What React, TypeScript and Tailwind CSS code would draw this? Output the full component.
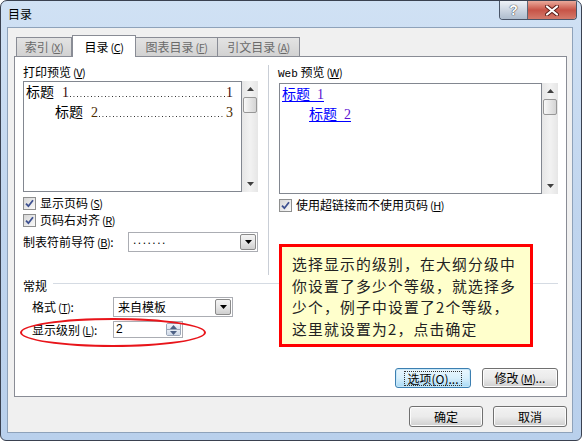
import React from 'react'

function Mn({ k }: { k: string }) {
  return (
    <span className="ml-[2px] text-[11px] tracking-[-0.5px]">
      (<span className="underline underline-offset-[1px]">{k}</span>)
    </span>
  )
}

function Tri({ up, className = 'fill-black' }: { up?: boolean; className?: string }) {
  return (
    <svg width="7" height="4" viewBox="0 0 7 4" className={className}>
      {up ? <path d="M0 4 L3.5 0 L7 4 Z" /> : <path d="M0 0 L7 0 L3.5 4 Z" />}
    </svg>
  )
}

function Check({ children }: { children: React.ReactNode }) {
  return (
    <div className="flex h-[16px] items-center gap-[4px]">
      <span className="flex h-[13px] w-[13px] items-center justify-center border border-[#8e8f8f] bg-gradient-to-br from-[#d6d6d6] to-[#fafafa]">
        <svg width="9" height="9" viewBox="0 0 9 9">
          <path d="M1 4.6 L3.4 7.2 L8 1.2" fill="none" stroke="#3e5190" strokeWidth="1.8" />
        </svg>
      </span>
      <span>{children}</span>
    </div>
  )
}

function VScroll() {
  return (
    <div className="flex w-[16px] flex-col bg-gradient-to-r from-[#e6e6e6] via-[#f2f2f2] to-[#e6e6e6]">
      <div className="flex h-[16px] items-center justify-center">
        <Tri up className="fill-[#404040]" />
      </div>
      <div className="mx-[1px] h-[16px] rounded-[2px] border border-[#979797] bg-gradient-to-r from-[#f8f8f8] to-[#d4d4d4]" />
      <div className="flex-1" />
      <div className="flex h-[16px] items-center justify-center">
        <Tri className="fill-[#404040]" />
      </div>
    </div>
  )
}

function DropBtn() {
  return (
    <div className="m-[1px] flex w-[16px] items-center justify-center rounded-[2px] border border-[#8a8a8a] bg-gradient-to-b from-[#f4f4f4] via-[#e6e6e6] to-[#cfcfcf]">
      <Tri />
    </div>
  )
}

function Btn({ children, focus }: { children: React.ReactNode; focus?: boolean }) {
  return (
    <div
      className={
        focus
          ? 'flex h-[20px] w-[76px] items-center justify-center rounded-[3px] border border-[#3c7fb1] bg-gradient-to-b from-[#eaf6fd] via-[#d9f0fc] to-[#a7d9f5] shadow-[inset_0_0_0_1px_#c7e7f8]'
          : 'flex h-[20px] w-[76px] items-center justify-center rounded-[3px] border border-[#707070] bg-gradient-to-b from-[#f2f2f2] via-[#ebebeb] to-[#cfcfcf] shadow-[inset_0_0_0_1px_#fcfcfc]'
      }
    >
      <span className={focus ? 'border border-dotted border-[#333] px-[2px] leading-[13px]' : 'px-[3px] leading-[13px]'}>
        {children}
      </span>
    </div>
  )
}

function DlgBtn({ children }: { children: React.ReactNode }) {
  return (
    <div className="flex h-[21px] w-[74px] items-center justify-center rounded-[3px] border border-[#707070] bg-gradient-to-b from-[#f2f2f2] via-[#ebebeb] to-[#cfcfcf] shadow-[inset_0_0_0_1px_#fcfcfc]">
      {children}
    </div>
  )
}

function Tab({ children, active, w }: { children: React.ReactNode; active?: boolean; w: string }) {
  return active ? (
    <div className={`${w} relative z-10 -mb-[1px] flex h-[22px] items-center justify-center border border-b-0 border-[#898c95] bg-white text-black`}>
      {children}
    </div>
  ) : (
    <div className={`${w} flex h-[19px] items-center justify-center border border-b-0 border-l-0 border-[#898c95] bg-gradient-to-b from-[#e3e3e3] to-[#d2d2d2] text-[#6a6a6a] first:border-l`}>
      {children}
    </div>
  )
}

// dotted tab leader drawn as a repeating background
function Leader() {
  return (
    <span className="mx-[1px] mb-[1px] h-[1px] flex-1 bg-[linear-gradient(to_right,#222_1px,transparent_1px)] bg-[length:3.5px_1px] bg-repeat-x" />
  )
}

export default function App() {
  return (
    <div className="h-[441px] w-[582px] font-['Noto_Sans_CJK_SC',sans-serif] text-[12px] leading-[16px] text-black">
      <div className="flex h-full flex-col overflow-hidden rounded-t-[7px] rounded-b-[6px] border border-[#3a4150] bg-gradient-to-b from-[#d0e1f4] via-[#c0d5ee] to-[#b9d0ec]">
        {/* title bar */}
        <div className="flex h-[26px] items-start justify-between">
          <div className="pl-[7px] pt-[5px]">目录</div>
          <div className="mr-[4px] flex h-[19px] overflow-hidden rounded-b-[4px] border border-t-0 border-[#4a5568]">
            <div className="flex w-[28px] items-center justify-center border-r border-[#5b6676] bg-gradient-to-b from-[#eef2f7] via-[#cdd6e2] to-[#aebccd]">
              <span className="font-['Liberation_Sans',sans-serif] text-[14px] font-bold leading-none text-white [text-shadow:0_0_1px_#333,0_0_1px_#333]">
                ?
              </span>
            </div>
            <div className="flex w-[48px] items-center justify-center bg-gradient-to-b from-[#e9a99b] via-[#c75347] to-[#d47a6b]">
              <svg width="14" height="11" viewBox="0 0 14 11">
                <path d="M2 1.5 L12 9.5 M12 1.5 L2 9.5" stroke="#5a1d18" strokeWidth="4" strokeLinecap="round" />
                <path d="M2 1.5 L12 9.5 M12 1.5 L2 9.5" stroke="#ffffff" strokeWidth="2.2" strokeLinecap="round" />
              </svg>
            </div>
          </div>
        </div>

        {/* client area */}
        <div className="mb-[7px] ml-[6px] mr-[8px] flex flex-1 flex-col border border-[#8ea2ba] bg-[#f0f0f0] pl-[6px] pr-[5px] pt-[7px]">
          <div className="relative z-10 flex h-[21px] items-end pl-[2px]">
            <Tab w="w-[56px]">
              索引<Mn k="X" />
            </Tab>
            <Tab w="w-[64px]" active>
              目录<Mn k="C" />
            </Tab>
            <Tab w="w-[82px]">
              图表目录<Mn k="F" />
            </Tab>
            <Tab w="w-[82px]">
              引文目录<Mn k="A" />
            </Tab>
          </div>

          <div className="relative flex h-[341px] flex-col border border-[#898c95] bg-white pb-[8px] pl-[8px] pr-[8px] pt-[7px]">
            <div className="flex h-[211px]">
              {/* print preview */}
              <div className="flex w-[235px] flex-col">
                <div>
                  打印预览<Mn k="V" />
                </div>
                <div className="mt-[1px] flex h-[111px]">
                  <div className="w-[219px] border border-[#828790] pl-[2px] pr-[8px] text-[14px] leading-[18px]">
                    <div className="flex items-baseline">
                      <span>标题</span>
                      <span className="ml-[8px] font-['Liberation_Serif',serif] text-[#3a0a0a]">1</span>
                      <Leader />
                      <span className="font-['Liberation_Serif',serif] text-[#3a0a0a]">1</span>
                    </div>
                    <div className="flex items-baseline pl-[29px]">
                      <span>标题</span>
                      <span className="ml-[8px] font-['Liberation_Serif',serif] text-[#4a2a00]">2</span>
                      <Leader />
                      <span className="font-['Liberation_Serif',serif] text-[#4a2a00]">3</span>
                    </div>
                  </div>
                  <VScroll />
                </div>
                <div className="mt-[3px]">
                  <Check>
                    显示页码<Mn k="S" />
                  </Check>
                </div>
                <div className="mt-[1px]">
                  <Check>
                    页码右对齐<Mn k="R" />
                  </Check>
                </div>
                <div className="mt-[4px] flex h-[20px] items-center">
                  <span>
                    制表符前导符<Mn k="B" />:
                  </span>
                  <div className="ml-auto flex h-[20px] w-[130px] border border-[#abadb3] bg-white">
                    <span className="flex-1 pl-[4px] font-['Liberation_Sans',sans-serif] text-[12px] leading-[15px] tracking-[1.5px]">
                      .......
                    </span>
                    <DropBtn />
                  </div>
                </div>
              </div>

              <div className="ml-[10px] mt-[1px] w-px bg-[#c9ced6]" />

              {/* web preview */}
              <div className="ml-[9px] flex flex-1 flex-col">
                <div>
                  <span className="font-['Liberation_Mono',monospace] text-[11px]">Web</span> 预览<Mn k="W" />
                </div>
                <div className="ml-[1px] mt-[1px] flex h-[111px]">
                  <div className="w-[263px] border border-[#828790] pl-[2px] text-[14px] leading-[18px] text-[#0000ff]">
                    <div>
                      <span className="underline underline-offset-[2px]">
                        标题{'\u2002'}
                        <span className="font-['Liberation_Serif',serif] text-[#5a10d0]">1</span>
                      </span>
                    </div>
                    <div className="pl-[27px]">
                      <span className="underline underline-offset-[2px]">
                        标题{'\u2002'}
                        <span className="font-['Liberation_Serif',serif] text-[#5a10d0]">2</span>
                      </span>
                    </div>
                  </div>
                  <VScroll />
                </div>
                <div className="ml-[1px] mt-[3px]">
                  <Check>
                    使用超链接而不使用页码<Mn k="H" />
                  </Check>
                </div>
              </div>
            </div>

            {/* general */}
            <div className="mt-[3px] flex h-[16px]">
              <span>常规</span>
              <div className="ml-[6px] mt-[5px] h-px flex-1 bg-[#d5dbe3]" />
            </div>
            <div className="mt-[3px] flex h-[20px] items-center pl-[9px]">
              <span className="w-[81px]">
                格式<Mn k="T" />:
              </span>
              <div className="flex h-[20px] w-[120px] border border-[#abadb3] bg-white">
                <span className="flex-1 pl-[4px] leading-[18px]">来自模板</span>
                <DropBtn />
              </div>
            </div>
            <div className="mt-[4px] flex h-[17px] items-center pl-[9px]">
              <span className="w-[81px]">
                显示级别<Mn k="L" />:
              </span>
              <div className="flex h-[17px] w-[70px] border border-[#abadb3] bg-white">
                <span className="flex-1 pl-[2px] font-['Liberation_Sans',sans-serif] leading-[15px]">2</span>
                <div className="m-[1px] flex w-[15px] flex-col overflow-hidden rounded-[2px] border border-[#9aa6b8]">
                  <div className="flex flex-1 items-center justify-center border-b border-[#9aa6b8] bg-gradient-to-b from-[#f2f5fa] to-[#dbe3ee]">
                    <Tri up className="fill-[#4d6185]" />
                  </div>
                  <div className="flex flex-1 items-center justify-center bg-gradient-to-b from-[#e6ecf4] to-[#cfd9e7]">
                    <Tri className="fill-[#4d6185]" />
                  </div>
                </div>
              </div>
            </div>

            <div className="mt-auto flex justify-end gap-[11px]">
              <Btn focus>选项(O)...</Btn>
              <Btn>
                修改<Mn k="M" />...
              </Btn>
            </div>

            {/* annotations */}
            <div className="absolute left-[5px] top-[261px] h-[29px] w-[186px] rounded-[50%] border-2 border-[#e8141a]" />
            <div className="absolute left-[264px] top-[187px] h-[103px] w-[254px] border-[3px] border-[#ff0000] bg-[#ffffcc] pl-[10px] pt-[6px] text-[14.8px] leading-[21.5px] tracking-[1.2px] text-[#222]">
              选择显示的级别，在大纲分级中
              <br />
              你设置了多少个等级，就选择多
              <br />
              少个，例子中设置了2个等级，
              <br />
              这里就设置为2，点击确定
            </div>
          </div>

          <div className="mt-[9px] flex justify-end gap-[10px]">
            <DlgBtn>确定</DlgBtn>
            <DlgBtn>取消</DlgBtn>
          </div>
        </div>
      </div>
    </div>
  )
}
